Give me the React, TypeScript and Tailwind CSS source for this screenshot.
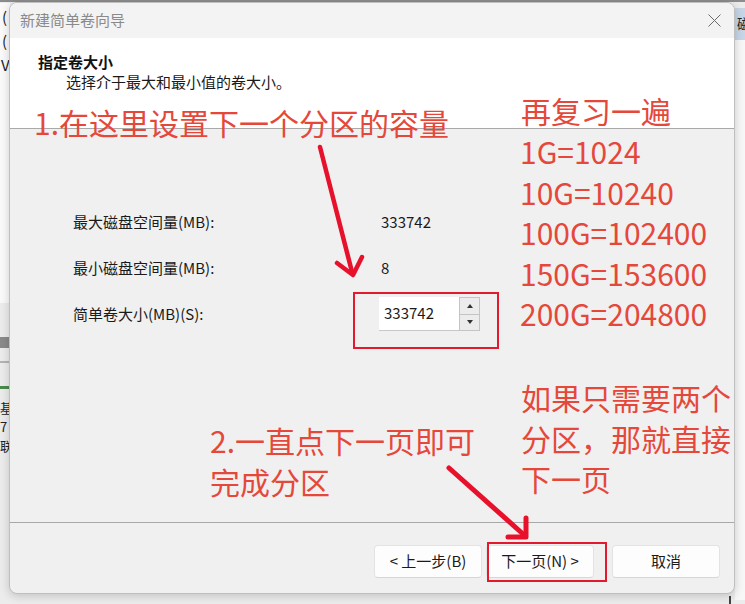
import React from "react";

const Label = ({ children }: { children: React.ReactNode }) => (
    <div className="w-[308px] shrink-0 text-[15px] text-[#1a1a1a]">{children}</div>
);

const Spinner = () => (
    <div className="flex h-[34px] w-[21px] flex-col border border-[#c4c4c4] bg-[#ececec]">
        <div className="flex flex-1 items-center justify-center border-b border-[#c4c4c4]">
            <svg width="6" height="4" viewBox="0 0 6 4">
                <path d="M0 4 L3 0 L6 4 Z" fill="#333" />
            </svg>
        </div>
        <div className="flex flex-1 items-center justify-center">
            <svg width="6" height="4" viewBox="0 0 6 4">
                <path d="M0 0 L3 4 L6 0 Z" fill="#333" />
            </svg>
        </div>
    </div>
);

const WizardButton = ({ children }: { children: React.ReactNode }) => (
    <div className="flex h-[33px] w-[108px] items-center justify-center rounded-[4px] border border-[#e3e3e3] border-b-[#d6d6d6] bg-[#fdfdfd] text-[15px] text-[#1a1a1a]">
        {children}
    </div>
);

export default function App() {
    return (
        <div className="relative h-[604px] w-[745px] overflow-hidden bg-[#ececec] font-['Noto_Sans_CJK_SC',sans-serif]">
            {/* window behind the dialog */}
            <div className="absolute inset-0">
                <div className="h-[2px] bg-[#8c8c8c]" />
                <div className="absolute left-0 top-[3px] h-[300px] w-[10px] bg-[#fafafa] text-[15px] leading-[24px] text-[#222]">
                    <div className="pl-[2px] pt-[2px]">(</div>
                    <div className="pl-[2px]">(</div>
                    <div className="pl-[1px]">V</div>
                </div>
                <div className="absolute left-0 top-[337px] h-[11px] w-[10px] bg-[#8a8a8a]" />
                <div className="absolute left-0 top-[361px] h-[2px] w-[10px] bg-[#b4b4b4]" />
                <div className="absolute left-0 top-[386px] h-[3px] w-[10px] bg-[#4a8a4a]" />
                <div className="absolute left-0 top-[398px] text-[13px] leading-[19px] text-[#222]">
                    <div>基</div>
                    <div>7</div>
                    <div>联</div>
                </div>
                <div className="absolute left-[735px] top-[8px] h-[32px] w-[10px] overflow-hidden bg-[#c6d6e6] pl-[2px] text-[14px] leading-[30px] text-[#222]">
                    磁
                </div>
                <div className="absolute left-[735px] top-[40px] h-[560px] w-[10px] bg-[#f7f7f7]" />
                <div className="absolute left-[729px] top-[596px] h-[8px] w-[2px] bg-[#444]" />
            </div>

            {/* dialog */}
            <div className="absolute left-[9px] top-[2px] flex h-[592px] w-[726px] flex-col overflow-hidden rounded-lg border border-[#bfbfbf] bg-[#f0f0f0] shadow-[0_2px_10px_rgba(0,0,0,0.18)]">
                <div className="flex h-[35px] shrink-0 items-center justify-between bg-[#f3f3f3] pl-[10px] pr-[13px]">
                    <span className="text-[15px] text-[#8a8a8a]">新建简单卷向导</span>
                    <svg width="13" height="13" viewBox="0 0 13 13">
                        <path d="M0.5 0.5 L12.5 12.5 M12.5 0.5 L0.5 12.5" stroke="#6b6b6b" strokeWidth="1" />
                    </svg>
                </div>
                <div className="h-[91px] shrink-0 border-b border-[#a9a9a9] bg-white pl-[28px] pt-[14px]">
                    <div className="text-[15px] font-bold leading-[20px] text-[#111]">指定卷大小</div>
                    <div className="pl-[28px] text-[15px] leading-[20px] text-[#1a1a1a]">选择介于最大和最小值的卷大小。</div>
                </div>
                <div className="flex-1 pl-[63px] pt-[70px]">
                    <div className="flex h-[46px] items-center">
                        <Label>最大磁盘空间量(MB):</Label>
                        <span className="text-[15px] text-[#1a1a1a]">333742</span>
                    </div>
                    <div className="flex h-[46px] items-center">
                        <Label>最小磁盘空间量(MB):</Label>
                        <span className="text-[15px] text-[#1a1a1a]">8</span>
                    </div>
                    <div className="flex h-[46px] items-center">
                        <Label>简单卷大小(MB)(S):</Label>
                        <div className="-ml-[2px] flex items-center">
                            <div className="flex h-[34px] w-[80px] items-center border-b border-[#c8c8c8] bg-white pl-[5px] text-[15px] text-[#1a1a1a]">
                                333742
                            </div>
                            <Spinner />
                        </div>
                    </div>
                </div>
                <div className="h-[1px] shrink-0 bg-[#a8a8a8]" />
                <div className="flex h-[70px] shrink-0 items-start justify-end gap-[18px] pr-[14px] pt-[22px]">
                    <div className="flex gap-[4px]">
                        <WizardButton>&lt; 上一步(B)</WizardButton>
                        <WizardButton>下一页(N) &gt;</WizardButton>
                    </div>
                    <WizardButton>取消</WizardButton>
                </div>
            </div>

            {/* annotations laid over the screenshot */}
            <div className="absolute left-[34px] top-[102px] text-[30px] leading-[40px] text-[#e5483a]">
                1.在这里设置下一个分区的容量
            </div>
            <div className="absolute left-[521px] top-[90px] text-[30px] leading-[40px] text-[#e5483a]">再复习一遍</div>
            <div className="absolute left-[520px] top-[131px] text-[30px] leading-[40.5px] text-[#e5483a]">
                <div>1G=1024</div>
                <div>10G=10240</div>
                <div>100G=102400</div>
                <div>150G=153600</div>
                <div>200G=204800</div>
            </div>
            <div className="absolute left-[521px] top-[377px] text-[30px] leading-[40.5px] text-[#e5483a]">
                <div>如果只需要两个</div>
                <div>分区，那就直接</div>
                <div>下一页</div>
            </div>
            <div className="absolute left-[210px] top-[420px] text-[30px] leading-[41px] text-[#e5483a]">
                <div>2.一直点下一页即可</div>
                <div>完成分区</div>
            </div>

            <div className="absolute left-[353px] top-[292px] h-[57px] w-[146px] border-2 border-[#e3192d]" />
            <div className="absolute left-[487px] top-[542px] h-[40px] w-[120px] border-2 border-[#e3192d]" />

            <svg className="pointer-events-none absolute inset-0" width="745" height="604" viewBox="0 0 745 604">
                <g stroke="#e8112b" fill="none" strokeLinecap="round" strokeLinejoin="round">
                    <path d="M320 147 L352 272" strokeWidth="4.5" />
                    <path d="M337 263 L353 275 L362 257" strokeWidth="4.5" />
                    <path d="M449 468 L523 534" strokeWidth="5" />
                    <path d="M526 518 L526 537 L508 537" strokeWidth="5" />
                </g>
            </svg>
        </div>
    );
}
